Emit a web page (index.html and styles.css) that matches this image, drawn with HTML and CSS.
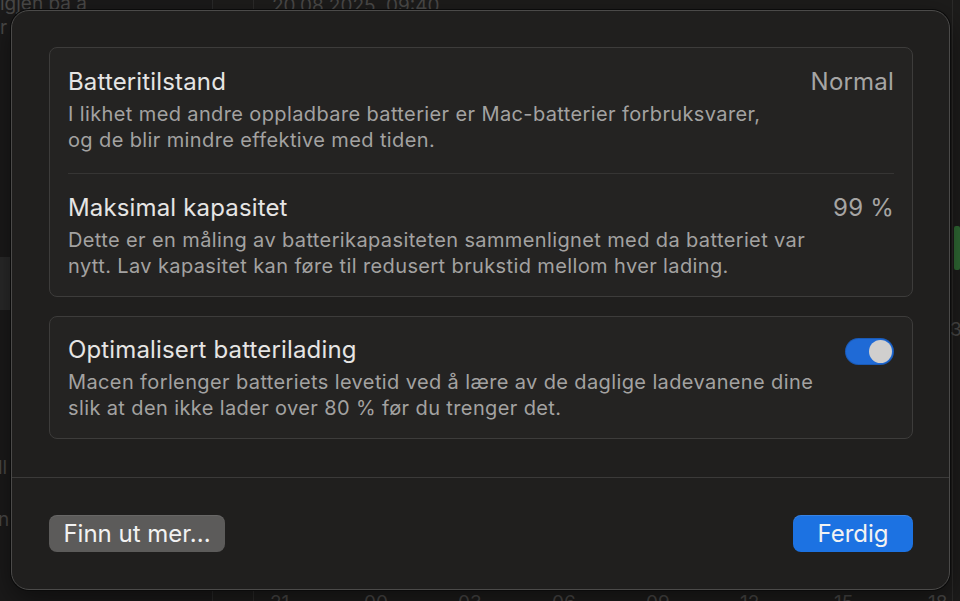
FILE: index.html
```html
<!DOCTYPE html>
<html lang="no">
<head>
<meta charset="utf-8">
<title>Batteri</title>
<link rel="stylesheet" href="styles.css">
</head>
<body>
<div class="backdrop">
  <div class="bg-left">
    <div class="bg-line1">igjen på å</div>
    <div class="bg-line2">r</div>
    <div class="bg-block"></div>
    <div class="bg-line3">ll</div>
    <div class="bg-line4">n</div>
  </div>
  <div class="bg-date">20.08.2025, 09:40</div>
  <div class="bg-vline v1"></div>
  <div class="bg-vline v2"></div>
  <div class="bg-green"></div>
  <div class="bg-three">3</div>
  <div class="bg-axis">
    <span>21</span><span>00</span><span>03</span><span>06</span><span>09</span><span>12</span><span>15</span><span>18</span>
  </div>
</div>

<div class="sheet">
  <div class="sheet-body">
    <section class="group">
      <div class="row">
        <div class="row-text">
          <div class="row-title">Batteritilstand</div>
          <div class="row-desc">I likhet med andre oppladbare batterier er Mac-batterier forbruksvarer,<br>og de blir mindre effektive med tiden.</div>
        </div>
        <div class="row-value">Normal</div>
      </div>
      <div class="row row-sep">
        <div class="row-text">
          <div class="row-title">Maksimal kapasitet</div>
          <div class="row-desc">Dette er en måling av batterikapasiteten sammenlignet med da batteriet var<br>nytt. Lav kapasitet kan føre til redusert brukstid mellom hver lading.</div>
        </div>
        <div class="row-value">99 %</div>
      </div>
    </section>

    <section class="group">
      <div class="row">
        <div class="row-text">
          <div class="row-title">Optimalisert batterilading</div>
          <div class="row-desc">Macen forlenger batteriets levetid ved å lære av de daglige ladevanene dine<br>slik at den ikke lader over 80 % før du trenger det.</div>
        </div>
        <div class="toggle on"><span class="knob"></span></div>
      </div>
    </section>
  </div>
  <div class="sheet-footer">
    <button class="btn btn-secondary">Finn ut mer...</button>
    <button class="btn btn-primary">Ferdig</button>
  </div>
</div>
</body>
</html>
```

FILE: styles.css
```css
* { box-sizing: border-box; }

html, body {
  margin: 0;
  padding: 0;
  width: 960px;
  height: 601px;
  overflow: hidden;
  background: #1d1c1b;
  font-family: Inter, "Noto Sans", "Liberation Sans", sans-serif;
}

.backdrop {
  position: absolute;
  inset: 0;
  color: #4a4948;
  font-size: 19px;
}

.bg-left {
  position: absolute;
  left: 0;
  top: 0;
  width: 213px;
  height: 601px;
  background: #1b1a1a;
  border-right: 1px solid #2a2a2a;
}
.bg-line1 { position: absolute; left: 0; top: -8px; }
.bg-line2 { position: absolute; left: 0; top: 16px; }
.bg-block { position: absolute; left: 0; top: 257px; width: 12px; height: 53px; background: #2a2a2a; }
.bg-line3 { position: absolute; left: -2px; top: 456px; }
.bg-line4 { position: absolute; left: -2px; top: 508px; }

.bg-date { position: absolute; left: 272px; top: -6px; }
.bg-vline { position: absolute; top: 0; width: 1px; height: 601px; background: #2c2b2a; }
.v1 { left: 253px; }
.v2 { left: 952px; }
.bg-green { position: absolute; left: 954px; top: 226px; width: 6px; height: 44px; background: #2f6a34; border-radius: 2px; }
.bg-three { position: absolute; left: 950px; top: 318px; }
.bg-axis {
  position: absolute;
  left: 270px;
  top: 591px;
  display: flex;
}
.bg-axis span { width: 94px; }

.sheet {
  position: absolute;
  left: 11px;
  top: 10px;
  width: 939px;
  height: 580px;
  background: #201f1e;
  border: 1px solid #4b4a49;
  border-radius: 18px;
  box-shadow: 0 0 0 1px #0b0b0b, 0 10px 30px rgba(0,0,0,0.5);
  display: flex;
  flex-direction: column;
}

.sheet-body {
  padding: 36px 36px 0 37px;
  display: flex;
  flex-direction: column;
  gap: 19px;
  height: 467px;
  border-bottom: 1px solid #3b3a39;
}

.group {
  background: #242322;
  border: 1px solid #3d3c3b;
  border-radius: 8px;
  padding: 0 18px;
}

.row {
  display: flex;
  justify-content: space-between;
  align-items: flex-start;
  padding: 19px 0 17px;
}
.group:first-child .row:first-child { padding-top: 20px; }
.row-sep {
  border-top: 1px solid #363534;
  padding-top: 20px;
}
.group .row:first-child { padding-bottom: 20px; }
.group .row:last-child { padding-bottom: 17px; }

.row-title {
  color: #e6e5e4;
  font-size: 24px;
  line-height: 28px;
  margin-bottom: 5px;
  letter-spacing: 0.15px;
}
.row-desc {
  color: #a3a2a1;
  font-size: 20px;
  line-height: 26px;
  letter-spacing: 0.38px;
}
.row-value {
  color: #a6a5a4;
  font-size: 24px;
  line-height: 28px;
  letter-spacing: 0.2px;
}

.toggle {
  width: 49px;
  height: 27px;
  border-radius: 14px;
  background: #1f6ad6;
  margin-top: 2px;
  position: relative;
  box-shadow: inset 0 0 0 1px rgba(0,0,0,0.15);
}
.toggle .knob {
  position: absolute;
  right: 2px;
  top: 2px;
  width: 23px;
  height: 23px;
  border-radius: 50%;
  background: #d0cfce;
}

.sheet-footer {
  display: flex;
  justify-content: space-between;
  align-items: center;
  padding: 37px 36px 36px 37px;
}

.btn {
  height: 37px;
  border: none;
  border-radius: 8px;
  font-family: Inter, "Noto Sans", "Liberation Sans", sans-serif;
  font-size: 24px;
  color: #f2f2f2;
  padding: 0;
}
.btn-secondary {
  width: 176px;
  background: #5c5b5a;
  box-shadow: inset 0 1px 0 rgba(255,255,255,0.08);
}
.btn-primary {
  width: 120px;
  background: #1c72e2;
  box-shadow: inset 0 1px 0 rgba(255,255,255,0.12);
}
```
